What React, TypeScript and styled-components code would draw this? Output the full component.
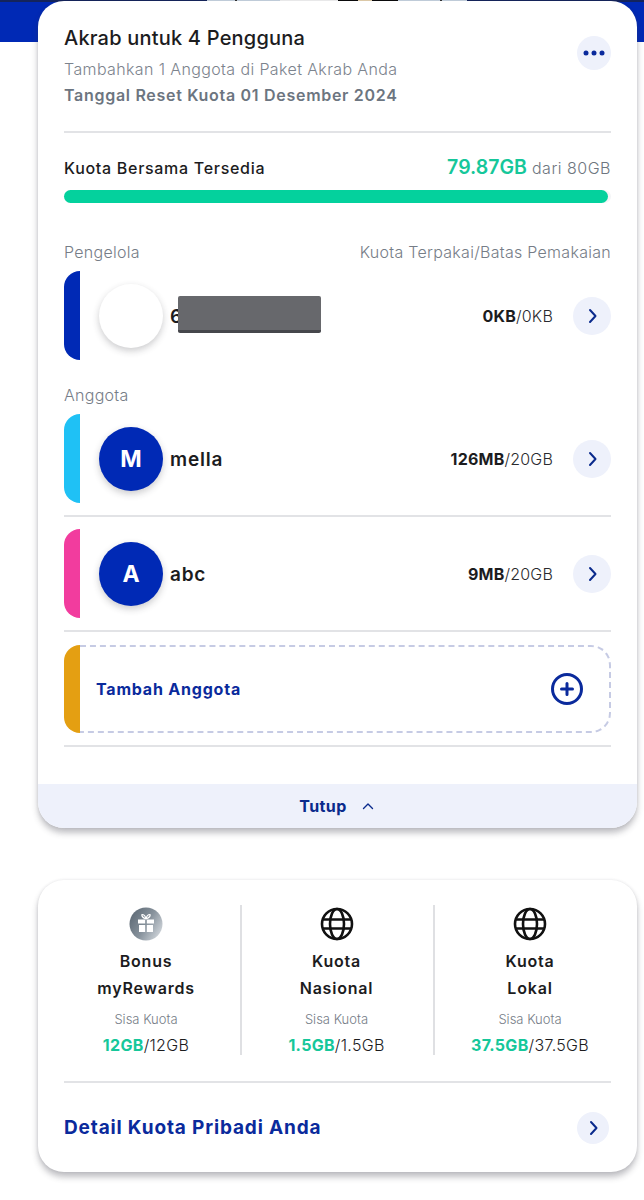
import React from "react";
import styled, { createGlobalStyle } from "styled-components";

const Global = createGlobalStyle`
  html, body { margin: 0; padding: 0; background: #fff; }
  body { font-family: "Inter", "Liberation Sans", sans-serif; color: #1c1c1e; }
`;

const Page = styled.div`
  position: relative;
  width: 644px;
  height: 1200px;
  overflow: hidden;
  background: #fff;
`;
const Banner = styled.div`
  height: 42px;
  background: #0029b5;
`;
const Sliver = styled.div`
  height: 2px;
  background: linear-gradient(
    to right,
    #14245c 207px,
    #c9d6e2 207px 235px,
    #333 235px 237px,
    #c9d6e2 237px 280px,
    #f4f4f4 280px 338px,
    #0a0a0a 338px 358px,
    #e6d3ae 358px 372px,
    #0a0a0a 372px 398px,
    #c9d6e2 398px 440px,
    #333 440px 442px,
    #c9d6e2 442px 467px,
    #14245c 467px
  );
`;
const Stack = styled.div`
  margin: -41px 7px 0 38px;
  display: flex;
  flex-direction: column;
  gap: 52px;
`;
const Card = styled.section`
  background: #fff;
  border-radius: 26px;
  overflow: hidden;
  box-shadow: 0 5px 6px rgba(60, 60, 70, 0.32), 0 0 3px rgba(60, 60, 70, 0.12);
`;
const TopCard = styled(Card)`
  height: 827px;
  display: flex;
  flex-direction: column;
`;
const Body = styled.div`
  flex: 1;
  padding: 0 26px;
`;
const Head = styled.header`
  height: 130px;
  display: flex;
  justify-content: space-between;
  align-items: flex-start;
  border-bottom: 2px solid #e2e3e6;
`;
const Title = styled.h1`
  margin: 25px 0 0;
  font-size: 20px;
  line-height: 24px;
  font-weight: 500;
  letter-spacing: 0.2px;
`;
const Sub = styled.p`
  margin: 9px 0 0;
  font-size: 16px;
  line-height: 20px;
  font-weight: 300;
  letter-spacing: 0.38px;
  color: #7c838d;
`;
const ResetDate = styled.p`
  margin: 6px 0 0;
  font-size: 16px;
  line-height: 20px;
  font-weight: 600;
  letter-spacing: 0.7px;
  color: #6c7580;
`;
const RoundButton = styled.button<{ $size?: number }>`
  width: ${(p) => p.$size ?? 38}px;
  height: ${(p) => p.$size ?? 38}px;
  border: 0;
  padding: 0;
  border-radius: 50%;
  background: #eef1fb;
  color: #0a2a9c;
  display: flex;
  align-items: center;
  justify-content: center;
  flex-shrink: 0;
`;
const MenuButton = styled(RoundButton)`
  margin-top: 35px;
`;
const QuotaRow = styled.div`
  margin-top: 22px;
  height: 26px;
  display: flex;
  justify-content: space-between;
  align-items: baseline;
`;
const QuotaLabel = styled.span`
  font-size: 16px;
  font-weight: 500;
  letter-spacing: 0.7px;
`;
const QuotaValue = styled.span`
  font-size: 16px;
  font-weight: 300;
  letter-spacing: 0.5px;
  color: #6e7680;
`;
const QuotaStrong = styled.strong`
  font-size: 19.5px;
  font-weight: 600;
  letter-spacing: 0;
  color: #16c79a;
  margin-right: 5px;
`;
const Track = styled.div`
  margin-top: 9px;
  height: 13px;
  border-radius: 7px;
  background: #f4f5f7;
`;
const Fill = styled.div`
  height: 100%;
  border-radius: 7px;
  background: #04d19d;
`;
const Labels = styled.div`
  margin-top: 39px;
  height: 20px;
  display: flex;
  justify-content: space-between;
  font-size: 16px;
  line-height: 20px;
  font-weight: 300;
  color: #767d87;
  letter-spacing: 0.28px;
`;
const Caption = styled.div`
  margin-top: 25px;
  height: 20px;
  font-size: 16px;
  line-height: 20px;
  font-weight: 300;
  color: #767d87;
  letter-spacing: 0.28px;
`;
const Row = styled.div<{ $top: number }>`
  position: relative;
  margin-top: ${(p) => p.$top}px;
  height: 89px;
  display: flex;
  align-items: center;
`;
const Rule = styled.div<{ $top: number }>`
  margin-top: ${(p) => p.$top}px;
  height: 2px;
  background: #e2e3e6;
`;
const Stripe = styled.div<{ $color: string }>`
  width: 16px;
  height: 100%;
  flex-shrink: 0;
  background: ${(p) => p.$color};
  border-radius: 16px 0 0 16px;
`;
const Avatar = styled.div<{ $blank?: boolean }>`
  width: 64px;
  height: 64px;
  margin-left: 19px;
  flex-shrink: 0;
  border-radius: 50%;
  background: ${(p) => (p.$blank ? "#fff" : "#0029b5")};
  color: #fff;
  font-size: 23px;
  font-weight: 700;
  display: flex;
  align-items: center;
  justify-content: center;
  box-shadow: 0 3px 7px rgba(40, 40, 50, 0.24);
`;
const Name = styled.span`
  margin-left: 7px;
  padding-top: 2px;
  font-size: 19px;
  font-weight: 600;
  letter-spacing: 0.8px;
`;
const Usage = styled.span`
  margin-left: auto;
  margin-right: 20px;
  font-size: 16px;
  font-weight: 300;
  letter-spacing: 0.2px;
  color: #2a2a2e;
`;
const UsageStrong = styled.strong`
  font-weight: 700;
  color: #1c1c1e;
`;
const Redaction = styled.div`
  position: absolute;
  left: 114px;
  top: 25px;
  width: 143px;
  height: 37px;
  background: #67686c;
  border-bottom: 3px solid #46474c;
  box-sizing: border-box;
  border-radius: 2px;
`;
const AddRow = styled(Row)`
  height: 88px;
`;
const AddBox = styled.div`
  flex: 1;
  height: 100%;
  box-sizing: border-box;
  border: 2px dashed #c6cbe4;
  border-left: 0;
  border-radius: 0 20px 20px 0;
  display: flex;
  align-items: center;
  justify-content: space-between;
  padding: 0 25px 0 16px;
`;
const AddLabel = styled.span`
  font-size: 16px;
  font-weight: 700;
  color: #0a2a9c;
  letter-spacing: 0.8px;
`;
const Footer = styled.footer`
  height: 44px;
  flex-shrink: 0;
  background: #eef1fb;
  display: flex;
  align-items: center;
  justify-content: center;
  gap: 15px;
  color: #0a2a8c;
  font-size: 16px;
  font-weight: 700;
  letter-spacing: 0.4px;
  padding-right: 2px;
`;
const BottomCard = styled(Card)`
  height: 292px;
  padding: 0 26px;
`;
const Columns = styled.div`
  padding-top: 25px;
  display: grid;
  grid-template-columns: 178px 193px 176px;
`;
const Column = styled.div<{ $pad: string; $last?: boolean }>`
  height: 150px;
  padding: ${(p) => p.$pad};
  display: flex;
  flex-direction: column;
  align-items: center;
  border-right: ${(p) => (p.$last ? "none" : "2px solid #dfe0e3")};
  box-sizing: border-box;
`;
const IconBox = styled.div`
  height: 38px;
  margin-top: 1px;
  display: flex;
  align-items: center;
  justify-content: center;
  color: #111;
`;
const ColTitle = styled.div`
  margin-top: 6px;
  text-align: center;
  font-size: 16px;
  line-height: 27px;
  font-weight: 600;
  letter-spacing: 0.8px;
`;
const Remain = styled.div`
  margin-top: 8px;
  font-size: 13px;
  line-height: 18px;
  font-weight: 300;
  color: #767d87;
`;
const Amount = styled.div`
  margin-top: 7px;
  font-size: 16px;
  line-height: 20px;
  font-weight: 300;
  letter-spacing: 0.3px;
`;
const AmountStrong = styled.strong`
  font-weight: 700;
  color: #16c79a;
`;
const DetailRow = styled.div`
  margin-top: 26px;
  border-top: 2px solid #e2e3e6;
  height: 89px;
  display: flex;
  align-items: center;
  justify-content: space-between;
  padding-right: 2px;
`;
const DetailLabel = styled.span`
  font-size: 19px;
  font-weight: 700;
  color: #0a2a9c;
  letter-spacing: 0.85px;
`;

const Chevron = () => (
  <svg width="14" height="16" viewBox="0 0 14 16" fill="none" stroke="#0a2a8c" strokeWidth="2" strokeLinecap="round" strokeLinejoin="round">
    <path d="M5 2 L10.5 8 L5 14" />
  </svg>
);
const Dots = () => (
  <svg width="24" height="6" viewBox="0 0 24 6" fill="#0a2a9c">
    <circle cx="4" cy="3" r="2.5" />
    <circle cx="12" cy="3" r="2.5" />
    <circle cx="20" cy="3" r="2.5" />
  </svg>
);
const Plus = () => (
  <svg width="34" height="34" viewBox="0 0 34 34" fill="none" stroke="#0a2a9c" strokeLinecap="round">
    <circle cx="17" cy="17" r="14.5" strokeWidth="3" />
    <path d="M17 11.5 V22.5 M11.5 17 H22.5" strokeWidth="3" />
  </svg>
);
const Up = () => (
  <svg width="12" height="8" viewBox="0 0 12 8" fill="none" stroke="#0a2a8c" strokeWidth="1.4" strokeLinecap="round" strokeLinejoin="round">
    <path d="M1.5 6.5 L6 2 L10.5 6.5" />
  </svg>
);
const Globe = () => (
  <svg width="34" height="34" viewBox="0 0 34 34" fill="none" stroke="#111" strokeWidth="2.6">
    <circle cx="17" cy="17" r="15" />
    <ellipse cx="17" cy="17" rx="7" ry="15" />
    <path d="M2.5 12.5 H31.5 M2.5 21.5 H31.5" />
  </svg>
);
const Gift = () => (
  <svg width="34" height="34" viewBox="0 0 34 34">
    <defs>
      <linearGradient id="giftbg" x1="0" y1="0" x2="1" y2="0.6">
        <stop offset="0" stopColor="#56626e" />
        <stop offset="0.6" stopColor="#87929c" />
        <stop offset="1" stopColor="#c6ccd2" />
      </linearGradient>
    </defs>
    <circle cx="17" cy="17" r="16.5" fill="url(#giftbg)" />
    <g fill="#fff">
      <rect x="9" y="12.5" width="7.2" height="4" />
      <rect x="17.8" y="12.5" width="7.2" height="4" />
      <rect x="10" y="18" width="6.2" height="7" />
      <rect x="17.8" y="18" width="6.2" height="7" />
    </g>
    <path d="M17 12 C14 11 12.5 9 13 7.5 C15 7.5 16.5 9.5 17 12 C17.5 9.5 19 7.5 21 7.5 C21.5 9 20 11 17 12 Z" fill="none" stroke="#fff" strokeWidth="1.2" />
  </svg>
);

const columns = [
  { icon: <Gift />, a: "Bonus", b: "myRewards", left: "12GB", total: "12GB", pad: "0 12px 0 0" },
  { icon: <Globe />, a: "Kuota", b: "Nasional", left: "1.5GB", total: "1.5GB", pad: "0 2px 0 0" },
  { icon: <Globe />, a: "Kuota", b: "Lokal", left: "37.5GB", total: "37.5GB", pad: "0 0 0 14px" },
];

export default function App() {
  return (
    <Page>
      <Global />
      <Banner><Sliver /></Banner>
      <Stack>
        <TopCard>
          <Body>
            <Head>
              <div>
                <Title>Akrab untuk 4 Pengguna</Title>
                <Sub>Tambahkan 1 Anggota di Paket Akrab Anda</Sub>
                <ResetDate>Tanggal Reset Kuota 01 Desember 2024</ResetDate>
              </div>
              <MenuButton $size={34} aria-label="Menu"><Dots /></MenuButton>
            </Head>
            <QuotaRow>
              <QuotaLabel>Kuota Bersama Tersedia</QuotaLabel>
              <QuotaValue><QuotaStrong>79.87GB</QuotaStrong>dari 80GB</QuotaValue>
            </QuotaRow>
            <Track><Fill style={{ width: `${(79.87 / 80) * 100 - 0.4}%` }} /></Track>
            <Labels>
              <span>Pengelola</span>
              <span>Kuota Terpakai/Batas Pemakaian</span>
            </Labels>
            <Row $top={9}>
              <Stripe $color="#0029b5" />
              <Avatar $blank />
              <Name>6</Name>
              <Redaction />
              <Usage><UsageStrong>0KB</UsageStrong>/0KB</Usage>
              <RoundButton aria-label="Buka"><Chevron /></RoundButton>
            </Row>
            <Caption>Anggota</Caption>
            <Row $top={9}>
              <Stripe $color="#1fc1f5" />
              <Avatar>M</Avatar>
              <Name>mella</Name>
              <Usage><UsageStrong>126MB</UsageStrong>/20GB</Usage>
              <RoundButton aria-label="Buka"><Chevron /></RoundButton>
            </Row>
            <Rule $top={12} />
            <Row $top={12}>
              <Stripe $color="#f23c9e" />
              <Avatar>A</Avatar>
              <Name>abc</Name>
              <Usage><UsageStrong>9MB</UsageStrong>/20GB</Usage>
              <RoundButton aria-label="Buka"><Chevron /></RoundButton>
            </Row>
            <Rule $top={12} />
            <AddRow $top={13}>
              <Stripe $color="#e49f12" />
              <AddBox>
                <AddLabel>Tambah Anggota</AddLabel>
                <Plus />
              </AddBox>
            </AddRow>
            <Rule $top={12} />
          </Body>
          <Footer>
            <span>Tutup</span>
            <Up />
          </Footer>
        </TopCard>
        <BottomCard>
          <Columns>
            {columns.map((c, i) => (
              <Column key={c.b} $pad={c.pad} $last={i === columns.length - 1}>
                <IconBox>{c.icon}</IconBox>
                <ColTitle>{c.a}<br />{c.b}</ColTitle>
                <Remain>Sisa Kuota</Remain>
                <Amount><AmountStrong>{c.left}</AmountStrong>/{c.total}</Amount>
              </Column>
            ))}
          </Columns>
          <DetailRow>
            <DetailLabel>Detail Kuota Pribadi Anda</DetailLabel>
            <RoundButton $size={32} aria-label="Detail"><Chevron /></RoundButton>
          </DetailRow>
        </BottomCard>
      </Stack>
    </Page>
  );
}
